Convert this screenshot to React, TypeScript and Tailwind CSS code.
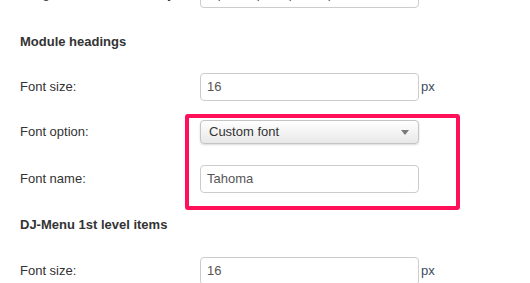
export default function App() {
  const label = "w-[200px] shrink-0 pl-[20px]";
  const input =
    "w-[219px] h-[28px] rounded-[4px] border border-[#cccccc] bg-white px-[6px] text-[#555555] flex items-center";

  return (
    <div className="w-[530px] h-[283px] overflow-hidden bg-white font-['Liberation_Sans',Arial,sans-serif] text-[13px] leading-[16px] text-[#333333]">
      {/* cut-off row at the very top */}
      <div className="flex items-center h-[28px] -mt-[20px]">
        <span className={label}>Margin of main menu body:</span>
        <div className={input}>0 px, 10 px, 0 px, 10 px</div>
      </div>

      <h3 className="mt-[26px] pl-[20px] font-bold">Module headings</h3>

      <div className="flex items-center mt-[23px]">
        <span className={label}>Font size:</span>
        <div className={input}>16</div>
        <span className="ml-[2px] text-[#3a4a5c]">px</span>
      </div>

      {/* highlighted block */}
      <div className="relative">
        <div className="absolute left-[185px] top-[-6px] w-[275px] h-[96px] rounded-[3px] border-[4px] border-[#ff1058] pointer-events-none" />

        <div className="flex items-center mt-[19px]">
          <span className={label}>Font option:</span>
          <div className="w-[219px] h-[24px] rounded-[4px] border border-[#c4c4c4] bg-gradient-to-b from-white to-[#e8e8e8] shadow-[0_1px_2px_rgba(0,0,0,0.15)] pl-[8px] pr-[8px] flex items-center justify-between">
            <span>Custom font</span>
            <svg width="8" height="5" viewBox="0 0 8 5" className="mr-[1px]">
              <path d="M0 0 L8 0 L4 5 Z" fill="#7a7a7a" />
            </svg>
          </div>
        </div>

        <div className="flex items-center mt-[21px]">
          <span className={label}>Font name:</span>
          <div className={input}>Tahoma</div>
        </div>
      </div>

      <h3 className="mt-[24px] pl-[20px] font-bold">DJ-Menu 1st level items</h3>

      <div className="flex items-center mt-[24px]">
        <span className={label}>Font size:</span>
        <div className={input}>16</div>
        <span className="ml-[2px] text-[#3a4a5c]">px</span>
      </div>
    </div>
  );
}
